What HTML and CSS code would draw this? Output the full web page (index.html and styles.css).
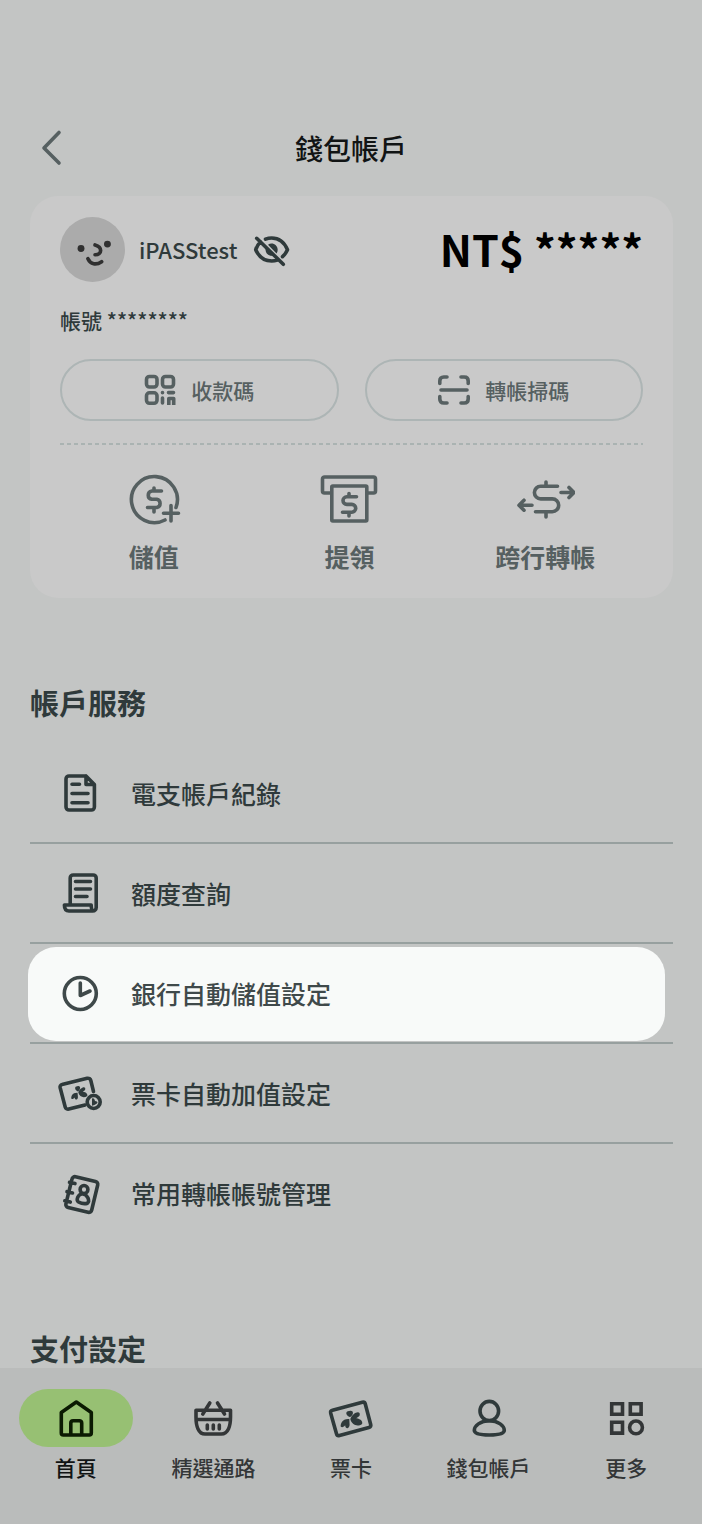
FILE: index.html
```html
<!DOCTYPE html>
<html lang="zh-Hant">
<head>
<meta charset="utf-8">
<meta name="viewport" content="width=device-width, initial-scale=1">
<title>錢包帳戶</title>
<link rel="stylesheet" href="styles.css">
</head>
<body>
<header class="topbar">
  <button class="back" type="button" aria-label="返回">
    <svg class="back-icon" viewBox="0 0 24 40"><path d="M21 4.500L6 20l15 15"/></svg>
  </button>
  <h1 class="title">錢包帳戶</h1>
</header>

<main class="content">
  <section class="card">
    <div class="profile">
      <svg class="avatar" viewBox="0 0 64 64">
        <circle class="avatar-bg" cx="32" cy="32" r="32"/>
        <circle class="avatar-eye" cx="20.7" cy="31" r="3.4"/>
        <circle class="avatar-eye" cx="46.7" cy="26.7" r="3.4"/>
        <path class="avatar-line" d="M34.5 27.5c3.500 1 5.500 3 5.500 5.500s-2 4.300-5.500 4.200M27.500 41c2.500 5.500 8 6.800 13.500 3"/>
      </svg>
      <span class="name">iPASStest</span>
      <button class="eye" type="button" aria-label="顯示餘額">
        <svg class="icon-40" viewBox="0 0 40 40">
          <path d="M14.500 9.200c2-.8 4.100-1.200 6.200-1.200 7 0 12.500 4 15.800 11.700-1.300 2.900-3 5.200-5 7M9.500 11.700c-2 2-3.700 4.600-4.800 8 3.200 7.200 9 11.300 16 11.300 2 0 4-.4 5.800-1M5.700 8.300l26.600 26"/>
          <path class="solid" d="M17 14.700c4-3 9.700 0 9.700 5 0 1.400-.4 2.700-1.200 3.700zM14.800 18l7.600 7.500c-4.600 1.300-8.900-2.700-7.600-7.500z"/>
        </svg>
      </button>
      <strong class="balance">NT$ *****</strong>
    </div>
    <p class="account">帳號 ********</p>
    <div class="pills">
      <button class="pill" type="button">
        <svg class="icon-32" viewBox="0 0 32 32">
          <rect x="2.500" y="2.500" width="10.500" height="10.500" rx="3"/>
          <rect x="18.500" y="2.500" width="11" height="10.500" rx="3"/>
          <rect x="2.500" y="18.800" width="10.500" height="10.500" rx="3"/>
          <path d="M18.500 18.600v.1M18.500 24v5M24.500 18.600h5"/>
          <path class="butt" d="M24.800 31v-6.500h4.900V31"/>
        </svg>
        收款碼
      </button>
      <button class="pill" type="button">
        <svg class="icon-32" viewBox="0 0 32 32">
          <path d="M1.800 9.500V7q0-4 4-4H9M23 3h3.200q4 0 4 4v2.500M30.200 22.500V25q0 4-4 4H23M9 29H5.800q-4 0-4-4v-2.500M3 16h26"/>
        </svg>
        轉帳掃碼
      </button>
    </div>
    <hr class="dash">
    <div class="actions">
      <button class="action" type="button">
        <svg class="icon-60" viewBox="0 0 60 60">
          <path d="M52 37.500A23 23 0 1 0 41 50M47 35.500v15.500M39.500 43.300h15M30 18v3M30 37.500v4.500M37.500 21h-9.700a4.200 4.200 0 0 0 0 8.300h5a4.200 4.200 0 0 1 0 8.200H23.500"/>
        </svg>
        儲值
      </button>
      <button class="action" type="button">
        <svg class="icon-60" viewBox="0 0 60 60">
          <path d="M12 23H5.500a2 2 0 0 1-2-2V9a2 2 0 0 1 2-2h49a2 2 0 0 1 2 2v12a2 2 0 0 1-2 2H49"/>
          <rect x="12.800" y="16" width="35" height="35" rx="1"/>
          <path d="M30 23.500v3M30 42.500v3.500M37.500 26.800h-9.700a3.800 3.800 0 0 0 0 7.600h5a3.800 3.800 0 0 1 0 7.800H23.500"/>
        </svg>
        提領
      </button>
      <button class="action" type="button">
        <svg class="icon-60" viewBox="0 0 60 60">
          <path d="M31 12v4M31 42v5M42.500 16.300H25.700a6.300 6.300 0 0 0 0 12.600h11.600a6.400 6.400 0 0 1 0 12.800H20.500M46 22.500h12M54 17.500l5 5-5 5M17 35.200H5M9 30.200l-5 5 5 5"/>
        </svg>
        跨行轉帳
      </button>
    </div>
  </section>

  <section class="group">
    <h2 class="heading">帳戶服務</h2>
    <ul class="list">
      <li class="item"><a class="row" href="#records">
        <svg class="icon-50" viewBox="0 0 50 50">
          <path d="M31 7H14a3 3 0 0 0-3 3v28a3 3 0 0 0 3 3h22.400a3 3 0 0 0 3-3V15.500L31 7v8.500h8.400M17 15.200h7.500M17 24.500h16M17 33.700h16"/>
        </svg><span class="label">電支帳戶紀錄</span></a></li>
      <li class="item"><a class="row" href="#limits">
        <svg class="icon-50" viewBox="0 0 50 50">
          <path d="M15.200 35V9a3 3 0 0 1 3-3h20a3 3 0 0 1 3 3v29.500a3.500 3.500 0 0 1-3.500 3.500H14q-4.600 0-4.600-6h26.800q0 6 2.800 6M20.500 12.500h15M20.500 20h15M20.500 27.500h11.500"/>
        </svg><span class="label">額度查詢</span></a></li>
      <li class="item"><a class="row row-active" href="#bank-auto">
        <svg class="icon-50" viewBox="0 0 50 50">
          <circle cx="25.300" cy="24.500" r="16"/><path d="M25.300 14v12.500L35 22"/>
        </svg><span class="label">銀行自動儲值設定</span></a></li>
      <li class="item"><a class="row" href="#card-auto">
        <svg class="icon-50" viewBox="0 0 50 50">
          <path d="M38.500 22.500L35.800 11.500a3 3 0 0 0-3.600-2.200L7 15.500a2.500 2.500 0 0 0-1.900 3L10.200 38a3 3 0 0 0 3.600 2.100L30 36"/>
          <g class="leaf" transform="translate(23.300 23.600) scale(.75) rotate(-5)">
            <path d="M-.5-1.500C-5-4-4.500-9-.5-8.500c4-1 5 3.500.5 7zM-1 0c-7-1-9 4-9 7 1.500 2 3.500 0 4.500-1 0 4 4 4 4.500 0zM0 0C2-5 8-8 9.500-5.500c1 3-1.500 4-3.500 5 5 1 6.500 4 5.500 6C7 8.500 1 6 0 0z"/>
          </g>
          <circle cx="38.700" cy="33" r="6.500"/>
          <path class="solid" d="M37 29.500q1.500-.8 2.500 1l.5 1.500q2.500 0 2.500 1.500T37 36.800z"/>
        </svg><span class="label">票卡自動加值設定</span></a></li>
      <li class="item"><a class="row" href="#payees">
        <svg class="icon-50" viewBox="0 0 50 50">
          <path d="M20.500 7.700l20 4.700a3 3 0 0 1 2.200 3.600L36.700 41a3 3 0 0 1-3.600 2.300l-20-4.800a3 3 0 0 1-2.200-3.600L17 10a3 3 0 0 1 3.500-2.300zM14.500 13.300l5.500 1.300M12 22.700l5.500 1.300M9.800 31.800l5.500 1.300"/>
          <ellipse cx="29" cy="20.500" rx="3.900" ry="4"/>
          <path d="M27.500 24.700c-5 .5-6.500 6.800-4 8.300 3 1.600 6.500 2 9 1.200 2.500-2 .5-8.500-5-9.500z"/>
        </svg><span class="label">常用轉帳帳號管理</span></a></li>
    </ul>
  </section>

  <section class="group">
    <h2 class="heading">支付設定</h2>
  </section>
</main>

<nav class="tabs">
  <a class="tab tab-active" href="#home"><span class="tab-mark">
    <svg class="icon-48" viewBox="0 0 48 48">
      <path d="M9.300 18.500L24.300 8l15 10.500V39a2 2 0 0 1-2 2h-26a2 2 0 0 1-2-2zM18.800 41V29a2.300 2.300 0 0 1 2.300-2.300h6.300a2.300 2.300 0 0 1 2.300 2.300v12"/>
    </svg></span>首頁</a>
  <a class="tab" href="#stores"><span class="tab-mark">
    <svg class="icon-48" viewBox="0 0 48 48">
      <path d="M7 16.200h34.500v6.800c0 9-2.500 17-9.200 17H16c-6.500 0-9-8-9-17zM7 25.500h34M20.800 9l-7 11M28.500 9l7 11M18.300 31V35M24.300 31V35M30.300 31V35"/>
    </svg></span>精選通路</a>
  <a class="tab" href="#cards"><span class="tab-mark">
    <svg class="icon-48 slate" viewBox="0 0 48 48">
      <path d="M5.500 16.200l29.800-8a2.500 2.500 0 0 1 3 1.800l5.400 20.500a2.500 2.500 0 0 1-1.800 3L12.500 41.500a2.500 2.500 0 0 1-3-1.800L3.700 19.200a2.500 2.500 0 0 1 1.800-3z"/>
      <g class="leaf" transform="translate(23.300 25) rotate(-3)">
        <path d="M-.5-2C-5-4-4.500-8.500-.5-8c4-1 5 3.500.5 6zM-1 0c-7-1-9 4-9 7 1.500 2 3.500 0 4.500-1 0 4 4 4 4.500 0zM0 0C2-5 8-8 9.500-5.500c1 3-1.500 4-3.500 5 5 1 6.500 4 5.500 6C7 8.500 1 6 0 0z"/>
      </g>
    </svg></span>票卡</a>
  <a class="tab" href="#wallet"><span class="tab-mark">
    <svg class="icon-48 slate" viewBox="0 0 48 48">
      <ellipse cx="24.300" cy="17" rx="9.300" ry="9.600"/>
      <path d="M24.300 26.800c-9 0-15 5-15 9.500 0 3 4.500 4.700 15 4.700s15-1.700 15-4.700c0-4.500-6-9.500-15-9.500z"/>
    </svg></span>錢包帳戶</a>
  <a class="tab" href="#more"><span class="tab-mark">
    <svg class="icon-48" viewBox="0 0 48 48">
      <path class="miter" d="M9.700 9.700h10.800v10.600H9.700zM28.300 9.700h10.800v10.600H28.300zM9.700 28.300h10.800v10.800H9.700z"/>
      <circle cx="34" cy="33.400" r="6.400"/>
    </svg></span>更多</a>
</nav>
</body>
</html>
```

FILE: styles.css
```css
* {
  box-sizing: border-box;
}

body {
  margin: 0;
  min-height: 100vh;
  display: flex;
  flex-direction: column;
  background: #c3c5c4;
  color: #2f3a3b;
  font-family: "Noto Sans CJK TC", sans-serif;
  font-weight: 500;
}

h1, h2, p, ul {
  margin: 0;
  padding: 0;
}

button {
  padding: 0;
  border: 0;
  background: none;
  color: inherit;
  font: inherit;
}

a {
  color: inherit;
  text-decoration: none;
}

svg {
  display: block;
  flex: none;
  fill: none;
  stroke: currentColor;
  stroke-width: 3.6;
  stroke-linecap: round;
  stroke-linejoin: round;
}

.solid,
.leaf {
  fill: currentColor;
  stroke: none;
}

.miter {
  stroke-linejoin: miter;
}

.butt {
  stroke-linecap: butt;
}

.icon-32 { width: 32px; height: 32px; }
.icon-40 { width: 40px; height: 40px; }
.icon-48 { width: 48px; height: 48px; }
.icon-50 { width: 50px; height: 50px; }
.icon-60 { width: 60px; height: 60px; }

.topbar {
  display: grid;
  grid-template-columns: 1fr auto 1fr;
  align-items: center;
  padding: 128px 38px 28px;
}

.back {
  justify-self: start;
  color: #566061;
}

.back-icon {
  width: 24px;
  height: 40px;
}

.title {
  color: #111414;
  font-size: 28px;
  font-weight: 500;
  line-height: 40px;
}

.content {
  flex: 1;
  padding: 0 29px 0 30px;
}

.card {
  padding: 21px 30px 23px;
  border-radius: 28px;
  background: #c9c9c9;
}

.profile {
  display: flex;
  align-items: center;
}

.avatar {
  width: 65px;
  height: 65px;
}

.avatar-bg {
  fill: #ababab;
  stroke: none;
}

.avatar-eye {
  fill: #303030;
  stroke: none;
}

.avatar-line {
  stroke: #303030;
}

.name {
  margin-left: 14px;
  padding-bottom: 2px;
  font-size: 22px;
  line-height: 32px;
}

.eye {
  margin-left: 14px;
}

.balance {
  margin-left: auto;
  padding-bottom: 4px;
  color: #000;
  font-size: 43px;
  font-weight: 700;
  line-height: 60px;
}

.account {
  margin-top: 22px;
  font-size: 21px;
  line-height: 32px;
}

.pills {
  display: grid;
  grid-template-columns: 1fr 1fr;
  gap: 26px;
  margin-top: 23px;
}

.pill {
  display: flex;
  align-items: center;
  justify-content: center;
  gap: 15px;
  height: 62px;
  border: 2px solid #adb5b5;
  border-radius: 31px;
  color: #566061;
  font-size: 21px;
}

.dash {
  height: 2px;
  margin: 22px 0 25px;
  border: 0;
  background: repeating-linear-gradient(90deg, #aab3b2 0 4px, transparent 4px 7px);
}

.actions {
  display: grid;
  grid-template-columns: repeat(3, 1fr);
  margin-left: -4px;
}

.action {
  display: flex;
  flex-direction: column;
  align-items: center;
  gap: 8px;
  color: #566061;
  font-size: 25px;
  font-weight: 700;
  line-height: 37px;
}

.group {
  margin-top: 84px;
}

.heading {
  font-size: 29px;
  font-weight: 700;
  line-height: 40px;
}

.list {
  margin-top: 22px;
  list-style: none;
}

.item {
  height: 100px;
  padding: 3px 0;
  border-bottom: 2px solid #97a09f;
}

.item:last-child {
  border-bottom-color: transparent;
}

.row {
  display: flex;
  align-items: center;
  gap: 26px;
  height: 94px;
  padding-left: 25px;
  font-size: 25px;
}

.label {
  padding-bottom: 2px;
}

.row-active {
  margin: 0 8px 0 -2px;
  padding-left: 27px;
  border-radius: 28px;
  background: #f8faf9;
  color: #3f494a;
}

.tabs {
  display: grid;
  grid-template-columns: repeat(5, 1fr);
  padding: 21px 7px 41px;
  background: #babcbb;
  color: #333637;
}

.tab {
  display: flex;
  flex-direction: column;
  align-items: center;
  gap: 4px;
  font-size: 21px;
  line-height: 32px;
}

.tab-mark {
  display: flex;
  align-items: center;
  justify-content: center;
  width: 114px;
  height: 58px;
  border-radius: 29px;
}

.slate {
  color: #2f3a3b;
}

.tab-active {
  color: #111414;
}

.tab-active .tab-mark {
  background: #97c073;
  color: #0b1a02;
}
```
